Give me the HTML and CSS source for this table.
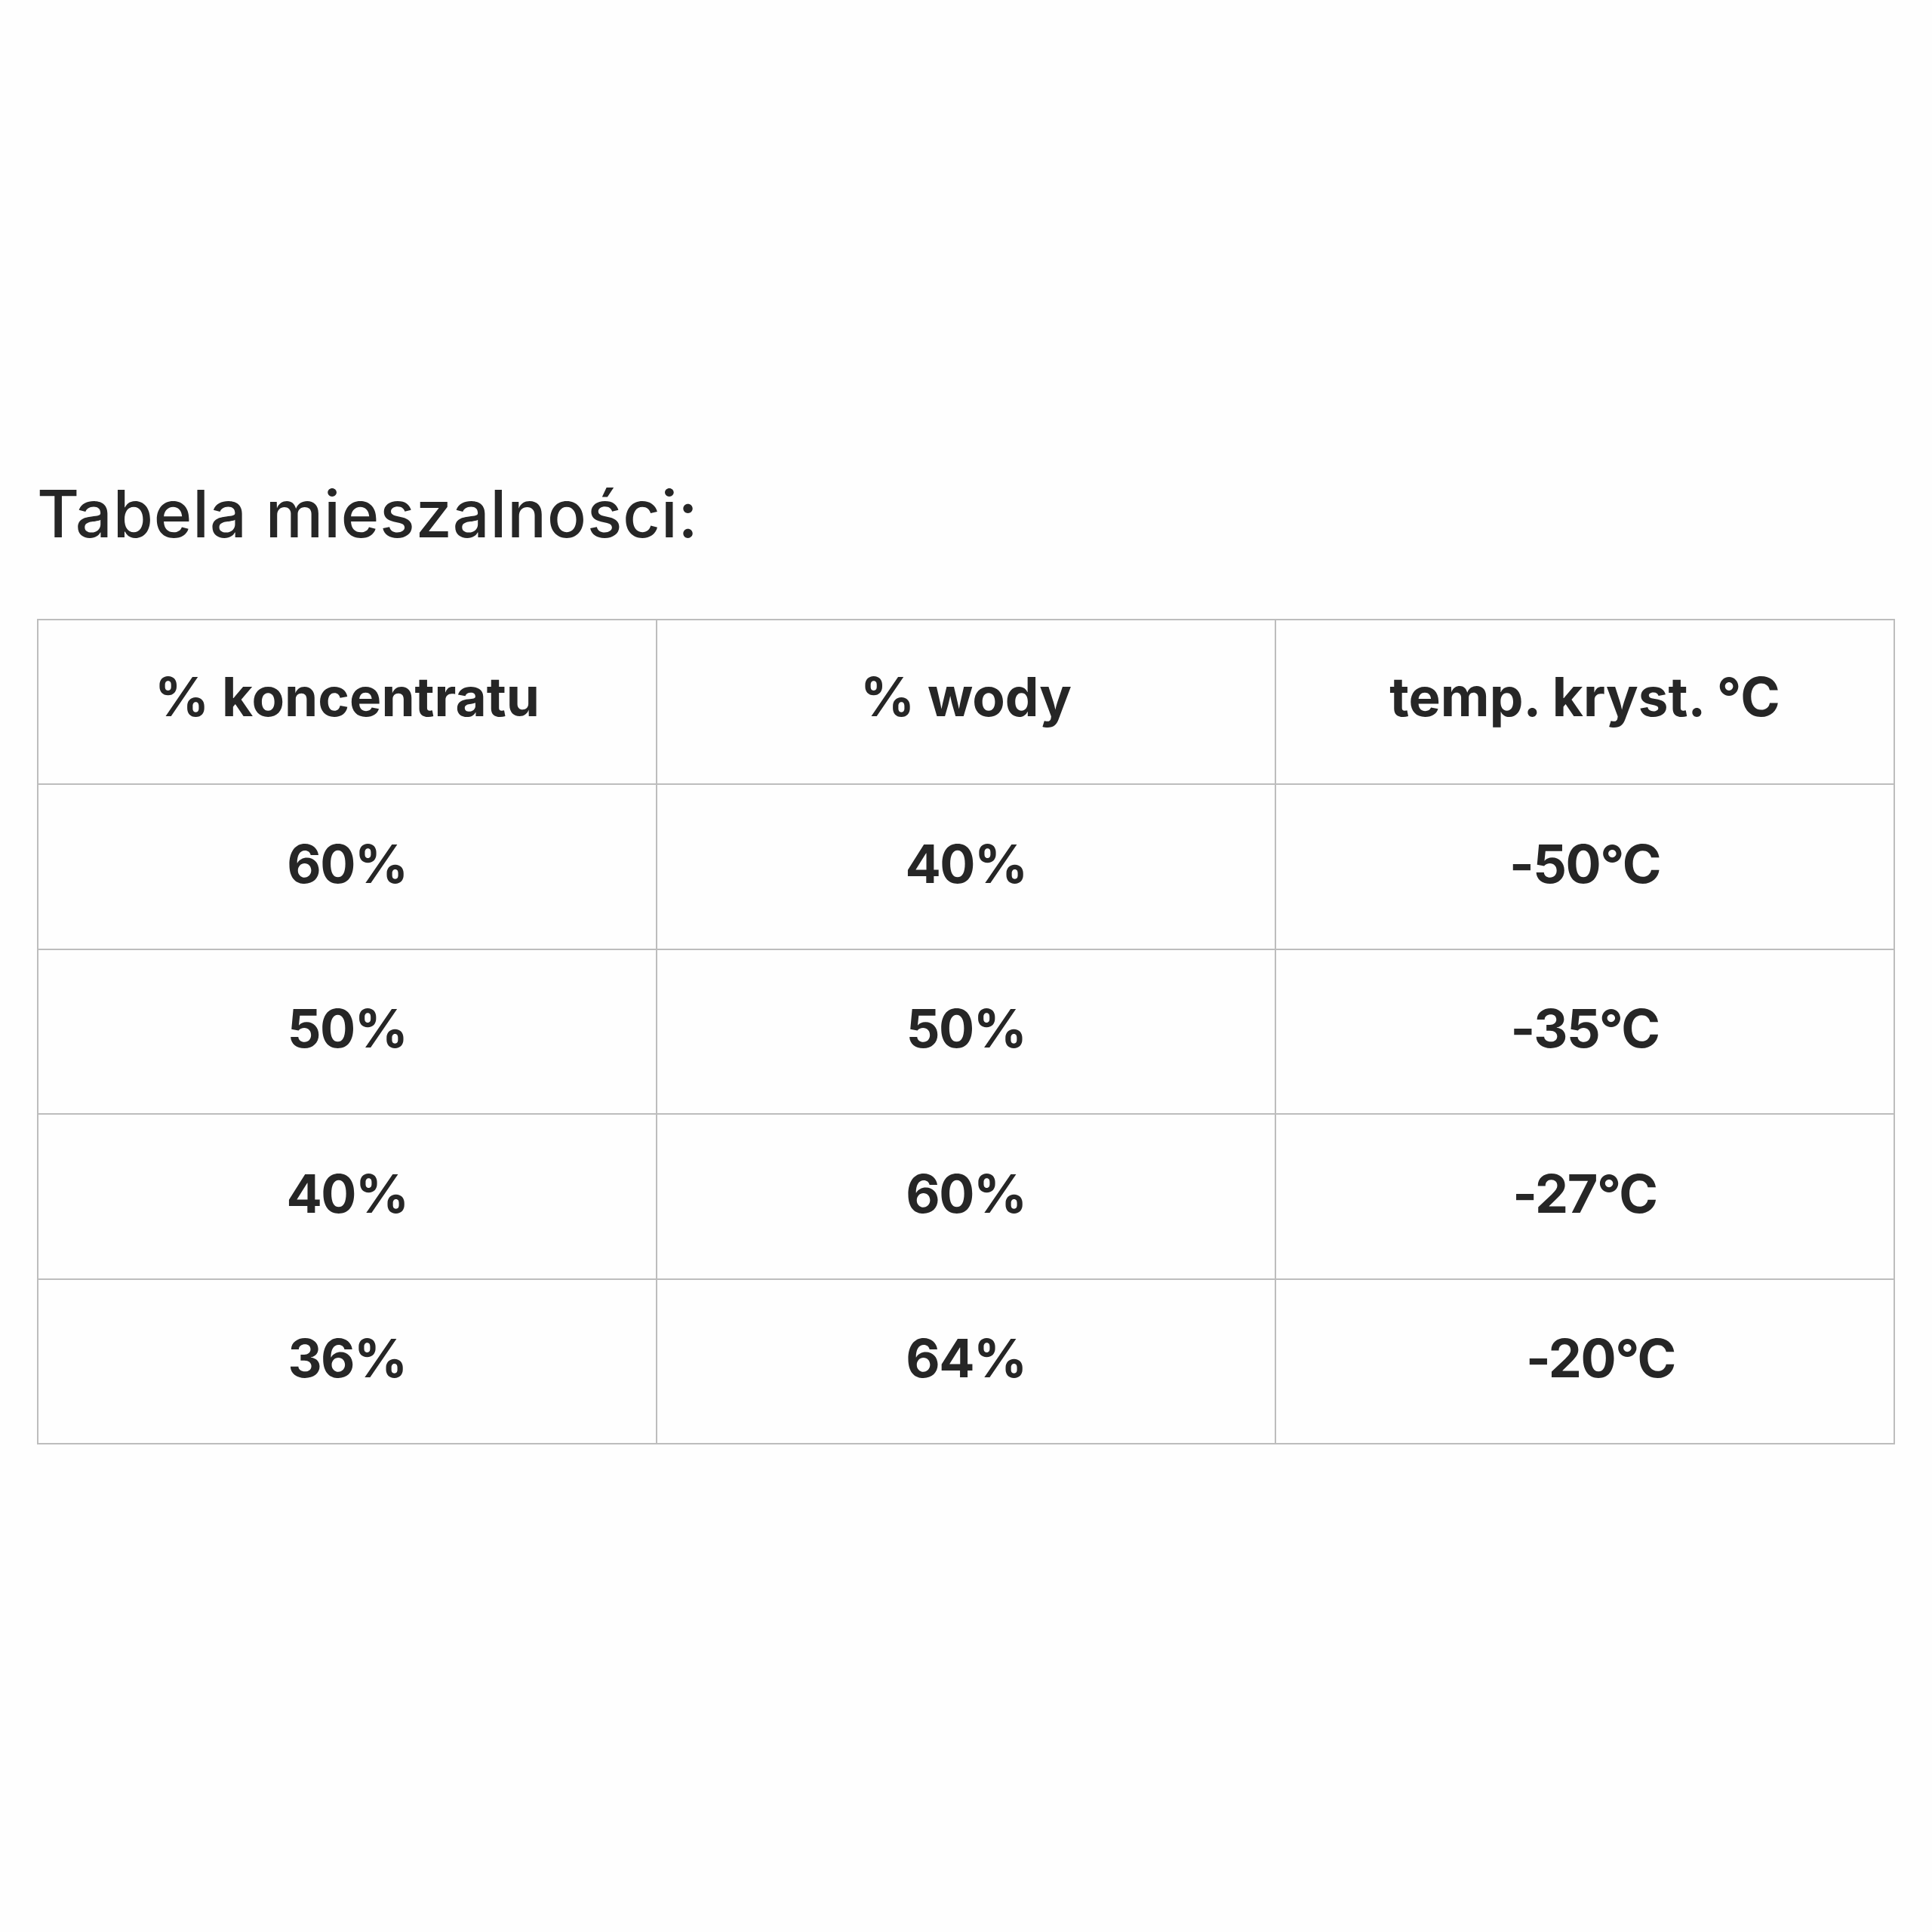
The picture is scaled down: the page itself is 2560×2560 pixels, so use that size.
FILE: index.html
```html
<!DOCTYPE html>
<html lang="pl">
<head>
<meta charset="utf-8">
<title>Tabela mieszalności</title>
<link rel="stylesheet" href="styles.css">
</head>
<body>
<main class="page">
  <h1 class="title">Tabela mieszalności:</h1>
  <div class="grid">
    <div class="cell head">% koncentratu</div>
    <div class="cell head">% wody</div>
    <div class="cell head">temp. kryst. °C</div>
    <div class="cell">60%</div>
    <div class="cell">40%</div>
    <div class="cell">-50°C</div>
    <div class="cell">50%</div>
    <div class="cell">50%</div>
    <div class="cell">-35°C</div>
    <div class="cell">40%</div>
    <div class="cell">60%</div>
    <div class="cell">-27°C</div>
    <div class="cell">36%</div>
    <div class="cell">64%</div>
    <div class="cell shifted">-20°C</div>
  </div>
</main>
</body>
</html>
```

FILE: styles.css
```css
html, body {
  margin: 0;
  padding: 0;
  background: #fefefe;
}
.page {
  padding: 631px 0 0 49px;
  width: 2462px;
  font-family: Inter, "Liberation Sans", sans-serif;
  color: #262626;
}
.title {
  margin: 0;
  font-size: 86px;
  line-height: 100px;
  font-weight: 500;
  letter-spacing: 1px;
}
.grid {
  margin-top: 89px;
  display: grid;
  grid-template-columns: repeat(3, 1fr);
  grid-auto-rows: 218.4px;
  border-top: 2px solid #bdbdbd;
  border-left: 2px solid #bdbdbd;
}
.cell {
  display: flex;
  align-items: center;
  justify-content: center;
  border-right: 2px solid #bdbdbd;
  border-bottom: 2px solid #bdbdbd;
  font-size: 70px;
  font-weight: 700;
  letter-spacing: -1.5px;
  padding-bottom: 8px;
  box-sizing: border-box;
}
.head {
  padding-bottom: 14px;
  font-size: 71px;
  letter-spacing: 0;
}
.shifted {
  padding-left: 42px;
}
```
